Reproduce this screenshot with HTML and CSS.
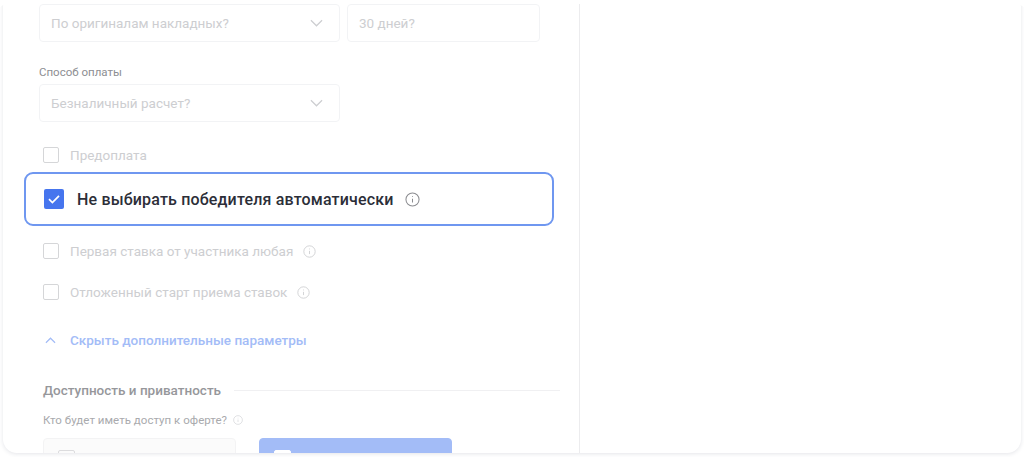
FILE: index.html
```html
<!DOCTYPE html>
<html lang="ru">
<head>
<meta charset="utf-8">
<title>Параметры</title>
<link rel="stylesheet" href="styles.css">
</head>
<body>
<main class="card">
  <section class="form">
    <div class="row">
      <div class="field field-wide"><span>По оригиналам накладных?</span>
        <svg class="chev" viewBox="0 0 14 8"><path d="M1 1l6 6 6-6"/></svg></div>
      <div class="field field-short"><span>30 дней?</span></div>
    </div>
    <label class="field-label">Способ оплаты</label>
    <div class="field field-wide"><span>Безналичный расчет?</span>
      <svg class="chev" viewBox="0 0 14 8"><path d="M1 1l6 6 6-6"/></svg></div>

    <div class="check check-first"><i class="box"></i><span>Предоплата</span></div>

    <div class="highlight">
      <i class="box-on"><svg viewBox="0 0 20 20"><path d="M5 10.2l3.4 3.3L15 6.8"/></svg></i>
      <strong>Не выбирать победителя автоматически</strong>
      <svg class="info info-big" viewBox="0 0 16 16"><circle cx="8" cy="8" r="7"/><path d="M8 7.2v4M8 4.4v1"/></svg>
    </div>

    <div class="check check-second"><i class="box"></i><span>Первая ставка от участника любая</span>
      <svg class="info" viewBox="0 0 16 16"><circle cx="8" cy="8" r="7"/><path d="M8 7.2v4M8 4.4v1"/></svg></div>
    <div class="check check-third"><i class="box"></i><span>Отложенный старт приема ставок</span>
      <svg class="info" viewBox="0 0 16 16"><circle cx="8" cy="8" r="7"/><path d="M8 7.2v4M8 4.4v1"/></svg></div>

    <div class="toggle">
      <svg viewBox="0 0 12 7"><path d="M1 6l5-5 5 5"/></svg>
      <span>Скрыть дополнительные параметры</span>
    </div>

    <div class="section-head"><h2>Доступность и приватность</h2><hr></div>
    <div class="question"><span>Кто будет иметь доступ к оферте?</span>
      <svg class="info info-small" viewBox="0 0 16 16"><circle cx="8" cy="8" r="7"/><path d="M8 7.2v4M8 4.4v1"/></svg></div>
    <div class="options">
      <div class="option"><i class="opt-box"></i></div>
      <div class="option option-active"><i class="opt-box"></i></div>
    </div>
  </section>
  <aside class="side"></aside>
</main>
</body>
</html>
```
FILE: styles.css
```css
* { box-sizing: border-box; }
html, body { margin: 0; height: 100%; }
body {
  width: 1024px;
  height: 457px;
  overflow: hidden;
  background: #fff;
  font-family: Roboto, "Noto Sans", sans-serif;
  padding: 0 3px 4px 3px;
}
.card {
  display: flex;
  height: 453px;
  background: #fff;
  border-radius: 0 0 14px 14px;
  box-shadow: 0 1px 4px rgba(30, 40, 70, .12);
  overflow: hidden;
  clip-path: inset(4px -8px -8px -8px round 14px);
}
.form {
  width: 577px;
  flex: none;
  padding: 4px 0 0 36px;
  border-right: 1px solid #ececee;
}
.side { flex: 1; }
.row { display: flex; gap: 7px; }
.field {
  height: 38px;
  display: flex;
  align-items: center;
  justify-content: space-between;
  padding: 0 16px 0 11px;
  border: 1px solid #f2f3f5;
  border-radius: 4px;
  font-size: 13.5px;
  color: #cdced1;
}
.field-wide { width: 301px; }
.field-short { width: 193px; }
.chev { width: 13px; height: 8px; fill: none; stroke: #cdced1; stroke-width: 1.3; }
.field-label {
  display: block;
  margin-top: 23px;
  height: 19px;
  line-height: 15px;
  font-size: 11.5px;
  color: #8d8e92;
}
.check {
  display: flex;
  align-items: center;
  margin-left: 4px;
  font-size: 13.5px;
  color: #cdced1;
}
.check-first { margin-top: 24px; height: 18px; }
.check-second { margin-top: 16px; height: 18px; }
.check-third { margin-top: 23px; height: 18px; }
.box {
  width: 16px;
  height: 16px;
  margin-right: 11px;
  border: 1.5px solid #d5d6d8;
  border-radius: 2px;
}
.info { width: 13px; height: 13px; margin-left: 10px; fill: none; stroke: #cfd0d2; stroke-width: 1.1; }
.highlight {
  display: flex;
  align-items: center;
  width: 530px;
  height: 54px;
  margin: 8px 0 0 -15px;
  padding-left: 18px;
  border: 2px solid #6f97f0;
  border-radius: 9px;
  background: #fff;
}
.box-on {
  display: block;
  width: 20px;
  height: 20px;
  margin-right: 13px;
  border-radius: 2px;
  background: #4675ee;
}
.box-on svg { display: block; fill: none; stroke: #fff; stroke-width: 1.7; }
.highlight strong {
  font-size: 16px;
  font-weight: 500;
  color: #2c2e38;
  letter-spacing: .17px;
}
.info-big { width: 15px; height: 15px; margin-left: 11px; stroke: #8b8c90; }
.toggle {
  display: flex;
  align-items: center;
  margin: 30px 0 0 6px;
  height: 18px;
  font-size: 13.5px;
  font-weight: 500;
  color: #a3bcf7;
}
.toggle svg { width: 11px; height: 7px; margin-right: 14px; fill: none; stroke: #a3bcf7; stroke-width: 1.3; }
.section-head {
  display: flex;
  align-items: center;
  margin: 32px 0 0 4px;
  height: 18px;
}
.section-head h2 {
  margin: 0;
  font-size: 13.5px;
  font-weight: 500;
  color: #96979b;
  white-space: nowrap;
}
.section-head hr {
  flex: 1;
  margin: 0 19px 0 13px;
  border: 0;
  border-top: 1px solid #f0f0f2;
}
.question {
  display: flex;
  align-items: center;
  margin: 13px 0 0 4px;
  height: 16px;
  font-size: 11.5px;
  letter-spacing: .03px;
  color: #a9aaad;
}
.info-small { width: 10px; height: 10px; margin-left: 6px; stroke: #d4d5d7; }
.options {
  display: flex;
  gap: 23px;
  margin: 10px 0 0 4px;
}
.option {
  width: 193px;
  height: 40px;
  padding: 11px 0 0 14px;
  border: 1px solid #f3f3f4;
  border-radius: 4px;
  background: #fbfbfb;
}
.option-active {
  border-color: #a3bcf7;
  background: #a3bcf7;
}
.opt-box {
  display: block;
  width: 17px;
  height: 17px;
  border: 1.5px solid #dcdcde;
  border-radius: 2px;
}
.option-active .opt-box { border-color: #fff; background: #fff; }
```
